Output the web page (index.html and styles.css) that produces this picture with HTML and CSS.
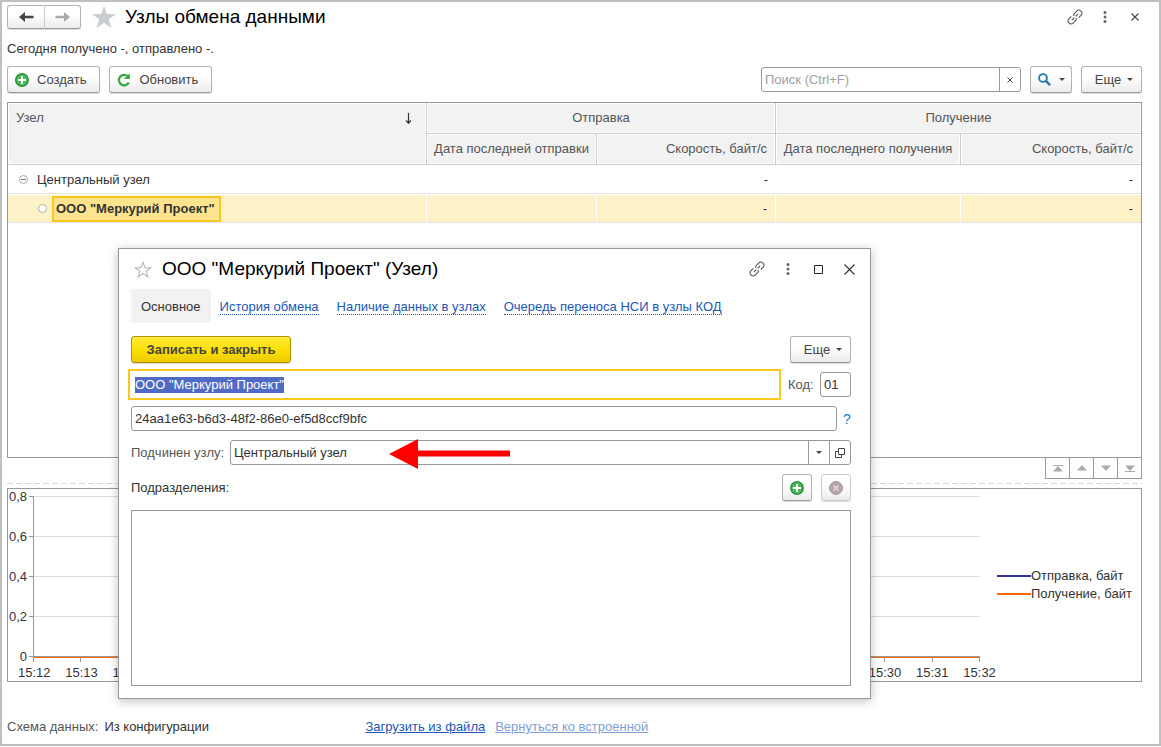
FILE: index.html
```html
<!DOCTYPE html>
<html lang="ru">
<head>
  <meta charset="utf-8">
  <title>Узлы обмена данными</title>
  <link rel="stylesheet" href="styles.css">
</head>
<body>
  <svg class="sprite" aria-hidden="true">
    <symbol id="link" viewBox="0 0 16 16">
      <g fill="none" stroke="#555" stroke-width="1.1">
        <path d="M6.300 5.600 9.900 1.900a2.600 2.600 0 0 1 3.800 0l.5.500a2.600 2.600 0 0 1 0 3.800L11.700 8.700M9.800 9.600H8.600"/>
        <path d="M9.700 10.400 6.100 14.100a2.600 2.600 0 0 1-3.800 0l-.5-.500a2.600 2.600 0 0 1 0-3.800L4.300 7.300M6.200 6.400H7.400"/>
        <path d="M5 11 7.300 8.700M8.700 7.300 11 5"/>
      </g>
    </symbol>
    <symbol id="dots" viewBox="0 0 4 12">
      <g fill="#666"><circle cx="2" cy="1.6" r="1.5"/><circle cx="2" cy="6" r="1.5"/><circle cx="2" cy="10.4" r="1.5"/></g>
    </symbol>
    <symbol id="plus" viewBox="0 0 14 14">
      <circle cx="7" cy="7" r="6.3" fill="#4cb956" stroke="#24903a" stroke-width="1.3"/>
      <path d="M7 3v8M3 7h8" stroke="#fff" stroke-width="2"/>
    </symbol>
    <symbol id="caret" viewBox="0 0 6 3">
      <path d="M0 0h6L3 3z" fill="#444"/>
    </symbol>
  </svg>

  <div class="app">
    <div class="titlebar">
      <div class="history">
        <button class="btn" aria-label="Назад"><svg width="15" height="12" viewBox="0 0 15 12"><path d="M0 6 6 1v3.800h8.500v2.400H6V11z" fill="#444"/></svg></button>
        <button class="btn" aria-label="Вперед"><svg width="15" height="12" viewBox="0 0 15 12"><path d="M15 6 9 1v3.800H.5v2.400H9V11z" fill="#aaa"/></svg></button>
      </div>
      <svg class="star" width="24" height="22" viewBox="0 0 24 22"><path d="M12 0l2.900 8H24l-7.300 5.200L19.400 22 12 16.700 4.600 22l2.700-8.800L0 8h9.100z" fill="#c9cdd1"/></svg>
      <h1>Узлы обмена данными</h1>
      <div class="window-icons">
        <button class="icon-btn" aria-label="Ссылка"><svg width="16" height="16"><use href="#link"/></svg></button>
        <button class="icon-btn" aria-label="Меню"><svg width="4" height="12"><use href="#dots"/></svg></button>
        <button class="icon-btn" aria-label="Закрыть"><svg width="8" height="8" viewBox="0 0 8 8"><path d="M.5.5l7 7M7.500.5l-7 7" stroke="#444" stroke-width="1.100"/></svg></button>
      </div>
    </div>

    <p class="summary">Сегодня получено -, отправлено -.</p>

    <div class="toolbar">
      <button class="btn"><svg width="14" height="14"><use href="#plus"/></svg>Создать</button>
      <button class="btn"><svg width="14" height="14" viewBox="0 0 14 14"><path d="M10.600 3.200A5.200 5.200 0 1 0 11.800 9.400" fill="none" stroke="#35a83f" stroke-width="2.200"/><path d="M7 6h5.800V.4z" fill="#35a83f"/></svg>Обновить</button>
      <div class="field search">
        <input type="text" placeholder="Поиск (Ctrl+F)" aria-label="Поиск">
        <button aria-label="Очистить"><svg width="6" height="6" viewBox="0 0 6 6"><path d="M.5.5l5 5M5.500.5l-5 5" stroke="#444"/></svg></button>
      </div>
      <button class="btn find" aria-label="Найти"><svg width="13" height="13" viewBox="0 0 13 13"><circle cx="5" cy="5" r="3.900" fill="none" stroke="#2f78ad" stroke-width="1.900"/><path d="M7.900 7.900l4.200 4.200" stroke="#2f78ad" stroke-width="2.600"/></svg><svg width="6" height="3"><use href="#caret"/></svg></button>
      <button class="btn more">Еще<svg width="6" height="3"><use href="#caret"/></svg></button>
    </div>

    <div class="list">
      <table>
        <colgroup>
          <col>
          <col class="col-sent">
          <col class="col-sent-speed">
          <col class="col-got">
          <col class="col-got-speed">
        </colgroup>
        <thead>
          <tr>
            <th rowspan="2" class="node"><div>Узел<svg width="7" height="11" viewBox="0 0 7 11"><path d="M3.500 0v10M1 7.500l2.500 2.700L6 7.500" fill="none" stroke="#333" stroke-width="1.200"/></svg></div></th>
            <th colspan="2">Отправка</th>
            <th colspan="2">Получение</th>
          </tr>
          <tr>
            <th>Дата последней отправки</th>
            <th class="num">Скорость, байт/с</th>
            <th>Дата последнего получения</th>
            <th class="num">Скорость, байт/с</th>
          </tr>
        </thead>
        <tbody>
          <tr>
            <td><div class="cell"><svg width="9" height="9" viewBox="0 0 9 9"><circle cx="4.500" cy="4.500" r="4" fill="#fff" stroke="#aaa"/><path d="M2 4.500h5" stroke="#777"/></svg><span>Центральный узел</span></div></td>
            <td></td>
            <td class="num">-</td>
            <td></td>
            <td class="num">-</td>
          </tr>
          <tr class="selected">
            <td><div class="cell child"><svg width="9" height="9" viewBox="0 0 9 9"><circle cx="4.500" cy="4.500" r="4" fill="#fff" stroke="#b5ae98"/></svg><b>ООО "Меркурий Проект"</b></div></td>
            <td></td>
            <td class="num">-</td>
            <td></td>
            <td class="num">-</td>
          </tr>
        </tbody>
      </table>
    </div>

    <div class="pager">
      <button aria-label="В начало"><svg width="10" height="7" viewBox="0 0 10 7"><path d="M0 0h10v1H0zM5 1l5 5.500H0z"/></svg></button>
      <button aria-label="Вверх"><svg width="10" height="6" viewBox="0 0 10 6"><path d="M5 0l5 5.500H0z"/></svg></button>
      <button aria-label="Вниз"><svg width="10" height="6" viewBox="0 0 10 6"><path d="M5 6L0 .5h10z"/></svg></button>
      <button aria-label="В конец"><svg width="10" height="7" viewBox="0 0 10 7"><path d="M0 6h10v1H0zM5 6L0 .5h10z"/></svg></button>
    </div>

    <div class="splitter"></div>

    <div class="chart">
      <div class="graph">
        <div class="y-labels"><span>0,8</span><span>0,6</span><span>0,4</span><span>0,2</span><span>0</span></div>
        <div class="y-ticks"><i></i><i></i><i></i><i></i><i></i></div>
        <div class="plot"><i></i><i></i><i></i><i></i></div>
        <div class="x-ticks" id="xTicks"></div>
        <div class="x-labels" id="xLabels"></div>
      </div>
      <ul class="legend">
        <li class="sent">Отправка, байт</li>
        <li class="got">Получение, байт</li>
      </ul>
    </div>

    <div class="footer">
      <span class="label">Схема данных:</span>
      <span class="scheme">Из конфигурации</span>
      <a href="#">Загрузить из файла</a>
      <a href="#" class="disabled">Вернуться ко встроенной</a>
    </div>
  </div>

  <div class="dialog" role="dialog" aria-labelledby="dialogTitle">
    <div class="dialog-title">
      <svg width="18" height="17" viewBox="0 0 18 17"><path d="M9 1.300l2 5.400h5.800l-4.600 3.500 1.700 5.700L9 12.500l-4.900 3.400 1.700-5.700L1.200 6.700H7z" fill="none" stroke="#b4b8bd" stroke-width="1.100"/></svg>
      <h2 id="dialogTitle">ООО "Меркурий Проект" (Узел)</h2>
      <div class="window-icons">
        <button class="icon-btn" aria-label="Ссылка"><svg width="16" height="16"><use href="#link"/></svg></button>
        <button class="icon-btn" aria-label="Меню"><svg width="4" height="12"><use href="#dots"/></svg></button>
        <button class="icon-btn" aria-label="Развернуть"><svg width="9" height="9" viewBox="0 0 9 9"><path d="M.5.5h8v8h-8z" fill="none" stroke="#222"/></svg></button>
        <button class="icon-btn" aria-label="Закрыть"><svg width="11" height="11" viewBox="0 0 11 11"><path d="M.5.5l10 10M10.500.5l-10 10" stroke="#333" stroke-width="1.100"/></svg></button>
      </div>
    </div>

    <nav class="tabs">
      <a href="#" class="active">Основное</a>
      <a href="#"><span>История обмена</span></a>
      <a href="#"><span>Наличие данных в узлах</span></a>
      <a href="#"><span>Очередь переноса НСИ в узлы КОД</span></a>
    </nav>

    <div class="commands">
      <button class="btn primary">Записать и закрыть</button>
      <button class="btn more">Еще<svg width="6" height="3"><use href="#caret"/></svg></button>
    </div>

    <div class="row">
      <div class="field focused"><input type="text" id="name" value='ООО "Меркурий Проект"' aria-label="Наименование"></div>
      <label for="code" class="label code-label">Код:</label>
      <div class="field code"><input type="text" id="code" value="01"></div>
    </div>

    <div class="row">
      <div class="field"><input type="text" value="24aa1e63-b6d3-48f2-86e0-ef5d8ccf9bfc" aria-label="Идентификатор"></div>
      <button class="help">?</button>
    </div>

    <div class="row">
      <label for="parent" class="label parent-label">Подчинен узлу:</label>
      <div class="field">
        <input type="text" id="parent" value="Центральный узел">
        <button aria-label="Выбрать"><svg width="6" height="3"><use href="#caret"/></svg></button>
        <button aria-label="Открыть"><svg width="10" height="10" viewBox="0 0 10 10"><path d="M3.500.5h6v6h-6zM3.500 3.500h-3v6h6v-3" fill="none" stroke="#444"/></svg></button>
      </div>
      <svg class="arrow" width="121" height="30" viewBox="0 0 121 30"><path d="M0 15 29 0v11.500h92v6H29V30z" fill="#f00"/></svg>
    </div>

    <div class="row departments">
      <span>Подразделения:</span>
      <button class="btn square" aria-label="Добавить"><svg width="14" height="14"><use href="#plus"/></svg></button>
      <button class="btn square" aria-label="Удалить" disabled><svg width="14" height="14" viewBox="0 0 14 14"><circle cx="7" cy="7" r="6.500" fill="#b9a3a6" stroke="#ab9699"/><path d="M4.500 4.500l5 5M9.500 4.500l-5 5" stroke="#e2d8d9" stroke-width="1.600"/></svg></button>
    </div>

    <div class="department-list"></div>
  </div>

  <script>
    const xTicks = document.getElementById('xTicks');
    const xLabels = document.getElementById('xLabels');

    for (let minute = 12; minute <= 32; minute++) {
      xTicks.appendChild(document.createElement('i'));
      const label = document.createElement('span');
      label.textContent = '15:' + minute;
      xLabels.appendChild(label);
    }

    const nameInput = document.getElementById('name');
    nameInput.focus();
    nameInput.select();
  </script>
</body>
</html>
```
FILE: styles.css
```css
* {
  box-sizing: border-box;
}

body {
  margin: 0;
  position: relative;
  background-color: #fff;
  color: #333;
  font-family: "Liberation Sans", Arial, sans-serif;
  font-size: 13px;
  line-height: 16px;
}

button,
input {
  font: inherit;
  color: inherit;
}

svg {
  display: block;
  flex: none;
}

a {
  color: #1b57b8;
}

.sprite {
  position: absolute;
  width: 0;
  height: 0;
}

.app {
  display: flex;
  flex-direction: column;
  min-height: calc(100vh - 1px);
  padding: 3px 17px 9px 5px;
  border: 2px solid #c0c0c0;
}

/* Title */
.titlebar {
  display: flex;
  align-items: center;
  height: 24px;
}

h1,
h2 {
  flex: 1;
  margin: 0;
  color: #000;
  font-size: 19px;
  font-weight: normal;
  line-height: 24px;
}

.history {
  display: flex;
}

.history .btn {
  width: 36px;
  height: 24px;
  padding: 0;
}

.history .btn:first-child {
  width: 38px;
  border-right-color: #ccc;
  border-radius: 3px 0 0 3px;
}

.history .btn:last-child {
  border-left: 0;
  border-radius: 0 3px 3px 0;
}

.star {
  margin: 0 9px 0 11px;
}

.window-icons {
  display: flex;
}

.icon-btn {
  display: flex;
  align-items: center;
  justify-content: center;
  width: 30px;
  height: 24px;
  padding: 0;
  border: none;
  background: none;
  cursor: pointer;
}

.titlebar .window-icons {
  margin-right: -8px;
}

.summary {
  margin: 12px 0 9px;
}

/* Buttons */
.btn {
  display: flex;
  align-items: center;
  justify-content: center;
  gap: 8px;
  height: 27px;
  padding: 0 13px 0 7px;
  border: 1px solid #b3b3b3;
  border-bottom-color: #999;
  border-radius: 3px;
  background: linear-gradient(#fff 40%, #ebebeb);
  box-shadow: 0 1px 1px rgba(0, 0, 0, 0.15);
  color: #444;
  white-space: nowrap;
  cursor: pointer;
}

.btn.more {
  gap: 6px;
  width: 61px;
  padding: 0 6px 0 11px;
}

.btn.find {
  width: 42px;
  padding: 0 6px;
}

.btn.square {
  width: 30px;
  padding: 0;
}

.btn:disabled {
  border-color: #ccc;
}

.btn.primary {
  width: 160px;
  padding: 0;
  border-color: #a89400;
  background: linear-gradient(#ffe93c, #fcdf00 55%, #ecca00);
  font-weight: bold;
}

.toolbar {
  display: flex;
  align-items: center;
  gap: 9px;
  margin-bottom: 9px;
}

.toolbar .search {
  flex: none;
  width: 260px;
  margin-left: auto;
}

/* Fields */
.field {
  display: flex;
  flex: 1;
  min-width: 0;
  height: 25px;
  border: 1px solid #999;
  border-radius: 3px;
  background-color: #fff;
}

.field input {
  flex: 1;
  width: 100%;
  min-width: 0;
  padding: 0 3px;
  border: none;
  outline: none;
  background: none;
}

.field input::placeholder {
  color: #a0a0a0;
}

.field input::selection {
  background-color: #4f6bc6;
  color: #fff;
}

.field button {
  display: flex;
  align-items: center;
  justify-content: center;
  width: 21px;
  padding: 0;
  border: none;
  border-left: 1px solid #999;
  background: none;
  cursor: pointer;
}

.field.focused {
  border-color: transparent;
  border-radius: 0;
  outline: 2px solid #f9c81e;
  outline-offset: 1px;
}

.label {
  color: #555;
}

/* Node list */
.list {
  flex: 1;
  border: 1px solid #999;
}

table {
  width: 100%;
  border-spacing: 0;
  table-layout: fixed;
}

.col-sent {
  width: 170px;
}

.col-sent-speed {
  width: 179px;
}

.col-got {
  width: 185px;
}

.col-got-speed {
  width: 180px;
}

th {
  height: 31px;
  padding: 0 7px;
  border-right: 1px solid #ccc;
  border-bottom: 1px solid #ccc;
  background-color: #f2f2f2;
  box-shadow: inset 0 0 0 1px #fff;
  color: #555;
  font-weight: normal;
  white-space: nowrap;
}

th:last-child {
  border-right: none;
}

th.node {
  padding-left: 8px;
  border-right: 1px solid #ccc;
  text-align: left;
  vertical-align: top;
}

th.node div {
  display: flex;
  align-items: center;
  justify-content: space-between;
  padding: 7px 7px 0 0;
}

td {
  height: 29px;
  padding: 1px 7px 0;
  border-bottom: 1px solid #e2e2e8;
}

.num {
  padding-right: 8px;
  text-align: right;
}

.cell {
  display: flex;
  align-items: center;
  gap: 9px;
  padding-left: 4px;
}

.cell.child {
  gap: 5px;
  padding-left: 23px;
}

.selected td {
  border-right: 1px solid #fff;
  background-color: #fdf2c7;
  box-shadow: inset 0 1px 0 #fff;
}

.selected td:last-child {
  border-right: none;
}

.selected b {
  padding: 3px 4px 3px 2px;
  border: 2px solid #f9c81e;
  background-color: #ffe48f;
}

.pager {
  display: flex;
  justify-content: flex-end;
  margin-top: -1px;
}

.pager button {
  display: flex;
  align-items: center;
  justify-content: center;
  width: 25px;
  height: 22px;
  margin-left: -1px;
  padding: 0;
  border: 1px solid #999;
  background: #fff;
  fill: #aaa;
}

.splitter {
  height: 1px;
  margin: 4px 0;
  background: repeating-linear-gradient(90deg, #d4d4d4 0 6px, #fff 6px 9px);
}

/* Chart */
.chart {
  display: flex;
  height: 194px;
  border: 1px solid #999;
}

.graph {
  display: grid;
  flex: 1;
  grid-template-columns: 19px 6px 1fr;
  grid-template-rows: 169px 5px 1fr;
}

.y-labels {
  display: flex;
  flex-direction: column;
  gap: 24px;
  text-align: right;
}

.y-ticks {
  margin: 7px 0 0 2px;
}

.y-ticks i {
  display: block;
  height: 40px;
  border-top: 1px solid #999;
}

.y-ticks i:last-child {
  height: 1px;
}

.plot {
  margin-top: 7px;
  border-left: 1px solid #999;
  border-bottom: 1px solid #ff6a00;
}

.plot i {
  display: block;
  height: 40px;
  border-top: 1px solid #ddd;
}

.plot i:last-child {
  height: 41px;
  border-bottom: 1px solid #999;
}

.x-ticks {
  display: flex;
  grid-column: 3;
  justify-content: space-between;
}

.x-ticks i {
  width: 1px;
  height: 4px;
  background-color: #999;
}

.x-labels {
  display: flex;
  grid-column: 1 / 4;
  justify-content: space-between;
  margin: 2px -16px 0 10px;
}

.legend {
  display: flex;
  flex-direction: column;
  justify-content: center;
  gap: 2px;
  width: 161px;
  margin: 0;
  padding: 0 0 0 17px;
  list-style: none;
}

.legend li {
  display: flex;
  align-items: center;
  white-space: nowrap;
}

.legend li::before {
  content: "";
  width: 34px;
  height: 2px;
  background-color: #3434a0;
}

.legend .got::before {
  background-color: #ff6a00;
}

.footer {
  display: flex;
  margin-top: 37px;
}

.footer .scheme {
  width: 261px;
  margin-left: 6px;
}

.footer .disabled {
  margin-left: 10px;
  color: #7f9fd8;
}

/* Node dialog */
.dialog {
  position: absolute;
  top: 248px;
  left: 118px;
  width: 753px;
  padding: 8px 19px 12px 12px;
  border: 1px solid #999;
  background-color: #fff;
  box-shadow: 0 2px 10px rgba(0, 0, 0, 0.25);
}

.dialog-title {
  display: flex;
  align-items: center;
  gap: 10px;
  padding-left: 3px;
}

.dialog-title .window-icons {
  margin-right: -14px;
}

.dialog-title .icon-btn {
  width: 31px;
}

.tabs {
  display: flex;
  margin: 8px 0 13px;
}

.tabs a {
  padding: 10px 10px 8px;
  text-decoration: none;
  white-space: nowrap;
}

.tabs a:not(.active) {
  padding: 10px 9px 8px;
}

.tabs span {
  border-bottom: 1px dotted #1b57b8;
}

.tabs .active {
  border-radius: 3px;
  background-color: #f2f2f2;
  color: #333;
}

.commands {
  display: flex;
  justify-content: space-between;
  margin-bottom: 9px;
}

.row {
  display: flex;
  position: relative;
  align-items: center;
  margin-bottom: 9px;
}

.code-label {
  width: 42px;
  padding-left: 10px;
}

.field.code {
  flex: none;
  width: 31px;
}

.help {
  width: 14px;
  padding: 0 0 0 6px;
  border: none;
  background: none;
  color: #1b7bbf;
  font-size: 14px;
}

.parent-label {
  width: 99px;
}

/* Pointer drawn over the parent field */
.arrow {
  position: absolute;
  top: -1px;
  left: 258px;
}

.departments {
  gap: 9px;
}

.departments span {
  flex: 1;
}

.department-list {
  height: 176px;
  border: 1px solid #999;
}
```
